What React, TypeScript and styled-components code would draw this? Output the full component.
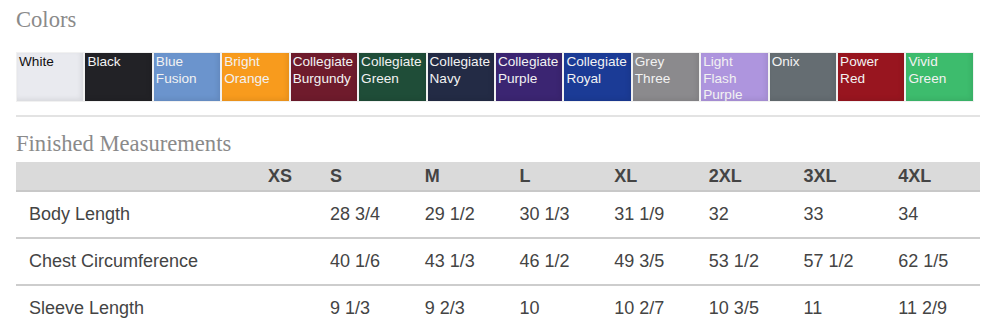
import React from "react";
import styled, { createGlobalStyle } from "styled-components";

const GlobalStyle = createGlobalStyle`
    body {
        margin: 0;
        background: #fff;
        font-family: "Liberation Sans", Arial, sans-serif;
    }
`;

const Page = styled.div`
    width: 964px;
    padding: 7px 0 0 16px;
`;

const SectionTitle = styled.h2`
    margin: 0;
    font-family: "Liberation Serif", "Times New Roman", serif;
    font-weight: 400;
    font-size: 22.6px;
    line-height: 26px;
    color: #8a8a8a;
`;

const SwatchList = styled.div`
    display: flex;
    width: 958px;
    height: 50px;
    margin-top: 19px;
`;

interface SwatchProps {
    bg: string;
    dark?: boolean;
}

const Swatch = styled.div<SwatchProps>`
    flex: 1;
    min-width: 0;
    overflow: hidden;
    box-sizing: border-box;
    border: 1px solid #f1f1f1;
    padding: 1px 2px;
    background-color: ${(props) => props.bg};
    box-shadow: inset -2px -2px 5px rgba(0, 0, 0, 0.08);
    color: ${(props) => (props.dark ? "#111" : "#f2f2f2")};
    font-size: 13.6px;
    line-height: 16.7px;
`;

const Rule = styled.hr`
    margin: 13px 0 14px;
    border: none;
    height: 2px;
    background: #e3e3e3;
`;

const Table = styled.div`
    margin-top: 5px;
    color: #444;
    font-size: 18px;
`;

interface RowProps {
    head?: boolean;
}

const Row = styled.div<RowProps>`
    display: grid;
    grid-template-columns: 239px 62px repeat(7, 1fr);
    height: ${(props) => (props.head ? "28px" : "45px")};
    line-height: ${(props) => (props.head ? "28px" : "45px")};
    background: ${(props) => (props.head ? "#dadada" : "#fff")};
    font-weight: ${(props) => (props.head ? 700 : 400)};
    border-bottom: 2px solid ${(props) => (props.head ? "#c8c8c8" : "#cdcdcd")};
`;

const Cell = styled.div`
    padding-left: 13px;
    white-space: nowrap;
`;

const colors = [
    { name: "White", bg: "#e9eaef", dark: true },
    { name: "Black", bg: "#222226" },
    { name: "Blue Fusion", bg: "#6b94cd" },
    { name: "Bright Orange", bg: "#f89b1d" },
    { name: "Collegiate Burgundy", bg: "#6f1b2c" },
    { name: "Collegiate Green", bg: "#1f4d38" },
    { name: "Collegiate Navy", bg: "#232b45" },
    { name: "Collegiate Purple", bg: "#3b2572" },
    { name: "Collegiate Royal", bg: "#1b3b96" },
    { name: "Grey Three", bg: "#8b8a8d" },
    { name: "Light Flash Purple", bg: "#ae95de" },
    { name: "Onix", bg: "#656d72" },
    { name: "Power Red", bg: "#98151f" },
    { name: "Vivid Green", bg: "#3dbc6d" },
];

const sizes = ["XS", "S", "M", "L", "XL", "2XL", "3XL", "4XL"];

const measurements = [
    { label: "Body Length", values: ["", "28 3/4", "29 1/2", "30 1/3", "31 1/9", "32", "33", "34"] },
    { label: "Chest Circumference", values: ["", "40 1/6", "43 1/3", "46 1/2", "49 3/5", "53 1/2", "57 1/2", "62 1/5"] },
    { label: "Sleeve Length", values: ["", "9 1/3", "9 2/3", "10", "10 2/7", "10 3/5", "11", "11 2/9"] },
];

const App: React.FC = () => {
    return (
        <Page>
            <GlobalStyle />
            <SectionTitle>Colors</SectionTitle>
            <SwatchList>
                {colors.map((c) => (
                    <Swatch key={c.name} bg={c.bg} dark={c.dark}>
                        {c.name}
                    </Swatch>
                ))}
            </SwatchList>
            <Rule />
            <SectionTitle>Finished Measurements</SectionTitle>
            <Table>
                <Row head>
                    <Cell />
                    {sizes.map((s) => (
                        <Cell key={s}>{s}</Cell>
                    ))}
                </Row>
                {measurements.map((m) => (
                    <Row key={m.label}>
                        <Cell>{m.label}</Cell>
                        {m.values.map((v, i) => (
                            <Cell key={i}>{v}</Cell>
                        ))}
                    </Row>
                ))}
            </Table>
        </Page>
    );
};

export default App;
